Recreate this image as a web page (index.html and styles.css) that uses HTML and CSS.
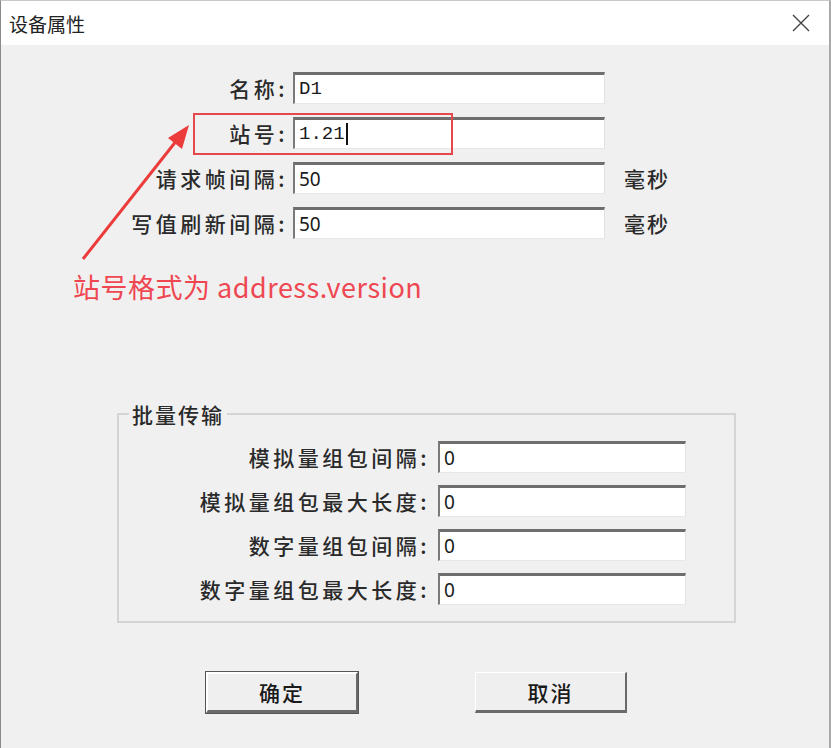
FILE: index.html
```html
<!DOCTYPE html>
<html lang="zh-CN">
<head>
    <meta charset="UTF-8">
    <title>设备属性</title>
    <link rel="stylesheet" href="styles.css">
</head>
<body>
    <div class="window">
        <div class="titlebar">
            <span class="title">设备属性</span>
            <svg class="close" width="20" height="20" viewBox="0 0 20 20">
                <path d="M2 2 L18 18 M18 2 L2 18" stroke="#444" stroke-width="1.4" fill="none"/>
            </svg>
        </div>

        <div class="body">
            <div class="form">
                <label class="label">名称:</label>
                <div class="input mono">D1</div>
                <span></span>

                <label class="label">站号:</label>
                <div class="input mono">1.21<span class="caret"></span></div>
                <span></span>

                <label class="label">请求帧间隔:</label>
                <div class="input">50</div>
                <span class="unit">毫秒</span>

                <label class="label">写值刷新间隔:</label>
                <div class="input">50</div>
                <span class="unit">毫秒</span>
            </div>

            <p class="note">站号格式为 address.version</p>

            <fieldset class="group">
                <legend>批量传输</legend>
                <div class="group-form">
                    <label class="label">模拟量组包间隔:</label>
                    <div class="input">0</div>
                    <label class="label">模拟量组包最大长度:</label>
                    <div class="input">0</div>
                    <label class="label">数字量组包间隔:</label>
                    <div class="input">0</div>
                    <label class="label">数字量组包最大长度:</label>
                    <div class="input">0</div>
                </div>
            </fieldset>

            <div class="buttons">
                <button class="btn default">确定</button>
                <button class="btn">取消</button>
            </div>
        </div>

        <!-- annotation overlay -->
        <div class="highlight"></div>
        <svg class="arrow" width="831" height="748" viewBox="0 0 831 748">
            <line x1="82" y1="258" x2="176" y2="139" stroke="#ec3b3b" stroke-width="3"/>
            <polygon points="188,124 167,137 181,148" fill="#ec3b3b"/>
        </svg>
    </div>
</body>
</html>
```

FILE: styles.css
```css
html, body {
    margin: 0;
    padding: 0;
}
body {
    font-family: "Noto Sans CJK SC", "Noto Sans", sans-serif;
    background: #f0f0f0;
    color: #1a1a1a;
}
.window {
    position: relative;
    width: 831px;
    height: 748px;
    box-sizing: border-box;
    border-left: 1px solid #8a8a8a;
    border-right: 2px solid #a8a8a8;
    border-top: 1px solid #c8c8c8;
    background: #f0f0f0;
    overflow: hidden;
}
.titlebar {
    height: 44px;
    background: #fff;
    display: flex;
    align-items: center;
    justify-content: space-between;
    padding: 0 18px 0 8px;
}
.title {
    font-size: 19px;
    color: #222;
}
.close { display: block; }

.body {
    padding-top: 27px;
}
.form {
    display: grid;
    grid-template-columns: 287px 312px auto;
    column-gap: 5px;
    row-gap: 13px;
    align-items: center;
}
.label {
    text-align: right;
    font-size: 21px;
    font-weight: 500;
    color: #2a2a2a;
    letter-spacing: 3.5px;
    line-height: 32px;
    white-space: nowrap;
}
.form .unit {
    font-size: 21px;
    font-weight: 500;
    color: #2a2a2a;
    letter-spacing: 2px;
    padding-left: 14px;
}
.input {
    height: 32px;
    box-sizing: border-box;
    background: #fff;
    border-top: 3px solid #6e6e6e;
    border-left: 2px solid #7a7a7a;
    border-right: 1px solid #e2e2e2;
    border-bottom: 1px solid #e8e8e8;
    font-size: 19px;
    line-height: 27px;
    padding-left: 4px;
    font-family: "Noto Sans", sans-serif;
    display: flex;
    align-items: center;
}
.input.mono {
    font-family: "Liberation Mono", monospace;
    font-size: 19px;
}
.caret {
    display: inline-block;
    width: 2px;
    height: 22px;
    background: #111;
    margin-left: 1px;
}

.note {
    margin: 32px 0 0 72px;
    font-size: 27px;
    letter-spacing: 0.5px;
    line-height: 32px;
    color: #ef4752;
}

.group {
    margin: 100px 0 0 116px;
    width: 619px;
    height: 220px;
    box-sizing: border-box;
    border: 2px solid #d4d4d4;
    padding: 16px 48px 0 0;
}
.group legend {
    font-size: 21px;
    font-weight: 500;
    color: #2a2a2a;
    letter-spacing: 2px;
    padding: 0 3px;
    margin-left: 10px;
    line-height: 22px;
}
.group-form {
    display: grid;
    grid-template-columns: 311px 248px;
    column-gap: 8px;
    row-gap: 12px;
}

.buttons {
    display: flex;
    gap: 117px;
    margin: 49px 0 0 205px;
}
.btn {
    width: 152px;
    height: 41px;
    font-family: inherit;
    font-size: 21px;
    font-weight: 500;
    letter-spacing: 2px;
    color: #1a1a1a;
    background: #efefef;
    border-top: 1px solid #fff;
    border-left: 1px solid #fff;
    border-right: 2px solid #6a6a6a;
    border-bottom: 3px solid #6a6a6a;
    padding: 0;
}
.btn.default {
    outline: 1px solid #555;
    border-top: 2px solid #fff;
    border-left: 2px solid #fff;
}

.highlight {
    position: absolute;
    left: 192px;
    top: 112px;
    width: 260px;
    height: 42px;
    box-sizing: border-box;
    border: 2px solid #e5474c;
}
.arrow {
    position: absolute;
    left: 0;
    top: 0;
    pointer-events: none;
}
```
